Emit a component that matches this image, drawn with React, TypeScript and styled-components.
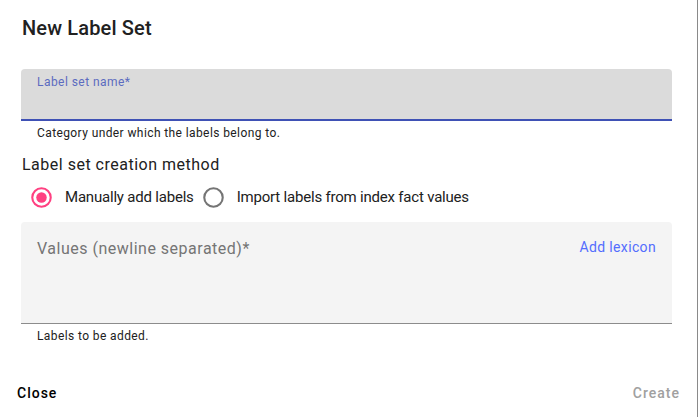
import React, { useState } from "react";
import styled, { createGlobalStyle } from "styled-components";

const GlobalStyle = createGlobalStyle`
    html, body {
        margin: 0;
        padding: 0;
        background: #ffffff;
    }
    body {
        font-family: Roboto, "Liberation Sans", Arial, sans-serif;
        color: rgba(0, 0, 0, 0.87);
    }
`;

const Dialog = styled.div`
    width: 698px;
    height: 417px;
    box-sizing: border-box;
    border-right: 1px solid #8a8a8a;
    background: #ffffff;
    display: flex;
    flex-direction: column;
    overflow: hidden;
`;

const Content = styled.div`
    padding: 0 25px 0 21px;
    display: flex;
    flex-direction: column;
`;

const Title = styled.h2`
    margin: 12px 0 0 1px;
    font-size: 20px;
    line-height: 32px;
    font-weight: 500;
    letter-spacing: 0.15px;
    color: #212121;
`;

const FilledField = styled.div`
    margin-top: 25px;
    height: 52px;
    box-sizing: border-box;
    background: #dbdbdb;
    border-radius: 4px 4px 0 0;
    border-bottom: 2px solid #3f51b5;
    padding: 5px 16px 0;
`;

const FloatingLabel = styled.label`
    display: block;
    font-size: 12px;
    line-height: 16px;
    letter-spacing: 0.45px;
    color: #5c6bc0;
`;

const HelperText = styled.p`
    margin: 4px 0 0 16px;
    font-size: 12px;
    line-height: 16px;
    letter-spacing: 0.4px;
    color: #212121;
`;

const SectionHeading = styled.h3`
    margin: 12px 0 0 1px;
    font-size: 16px;
    line-height: 24px;
    font-weight: 400;
    letter-spacing: 0.5px;
    color: #212121;
`;

const RadioGroup = styled.div`
    margin: 8px 0 0 10px;
    display: flex;
    align-items: center;
    height: 24px;
    gap: 9px;
`;

const RadioOption = styled.label`
    display: flex;
    align-items: center;
    gap: 13px;
    font-size: 15px;
    line-height: 24px;
    letter-spacing: -0.2px;
    color: #212121;
    cursor: pointer;
`;

const RadioIcon = styled.svg`
    width: 21px;
    height: 21px;
    flex-shrink: 0;
`;

const AreaField = styled.div`
    margin-top: 13px;
    height: 102px;
    box-sizing: border-box;
    background: #f4f4f4;
    border-radius: 4px 4px 0 0;
    border-bottom: 1px solid #8c8c8c;
    padding: 15px 16px 0;
    display: flex;
    justify-content: space-between;
    align-items: flex-start;
`;

const Placeholder = styled.span`
    font-size: 16px;
    line-height: 24px;
    letter-spacing: 0.5px;
    color: #757575;
`;

const LinkButton = styled.button`
    border: 0;
    background: none;
    padding: 0;
    font-family: inherit;
    font-size: 14px;
    line-height: 20px;
    letter-spacing: 0.35px;
    color: #536dfe;
    cursor: pointer;
`;

const Footer = styled.div`
    margin-top: 39px;
    padding: 0 17px 0 17px;
    display: flex;
    justify-content: space-between;
`;

const ActionButton = styled.button<{ $disabled?: boolean }>`
    border: 0;
    background: none;
    padding: 0;
    font-family: inherit;
    font-size: 14px;
    line-height: 20px;
    font-weight: 500;
    letter-spacing: 1px;
    color: ${(p) => (p.$disabled ? "#a0a0a0" : "#000000")};
    cursor: ${(p) => (p.$disabled ? "default" : "pointer")};
`;

const Radio = ({ checked }: { checked: boolean }) => (
    <RadioIcon viewBox="0 0 20 20">
        <circle
            cx="10"
            cy="10"
            r="8.8"
            fill="none"
            stroke={checked ? "#ff4081" : "#757575"}
            strokeWidth="2"
        />
        {checked && <circle cx="10" cy="10" r="5" fill="#ff4081" />}
    </RadioIcon>
);

const App = () => {
    const [method, setMethod] = useState<"manual" | "import">("manual");

    return (
        <>
            <GlobalStyle />
            <Dialog>
                <Content>
                    <Title>New Label Set</Title>
                    <FilledField>
                        <FloatingLabel>Label set name*</FloatingLabel>
                    </FilledField>
                    <HelperText>Category under which the labels belong to.</HelperText>

                    <SectionHeading>Label set creation method</SectionHeading>
                    <RadioGroup>
                        <RadioOption onClick={() => setMethod("manual")}>
                            <Radio checked={method === "manual"} />
                            Manually add labels
                        </RadioOption>
                        <RadioOption onClick={() => setMethod("import")}>
                            <Radio checked={method === "import"} />
                            Import labels from index fact values
                        </RadioOption>
                    </RadioGroup>

                    <AreaField>
                        <Placeholder>Values (newline separated)*</Placeholder>
                        <LinkButton>Add lexicon</LinkButton>
                    </AreaField>
                    <HelperText>Labels to be added.</HelperText>
                </Content>
                <Footer>
                    <ActionButton>Close</ActionButton>
                    <ActionButton $disabled>Create</ActionButton>
                </Footer>
            </Dialog>
        </>
    );
};

export default App;
